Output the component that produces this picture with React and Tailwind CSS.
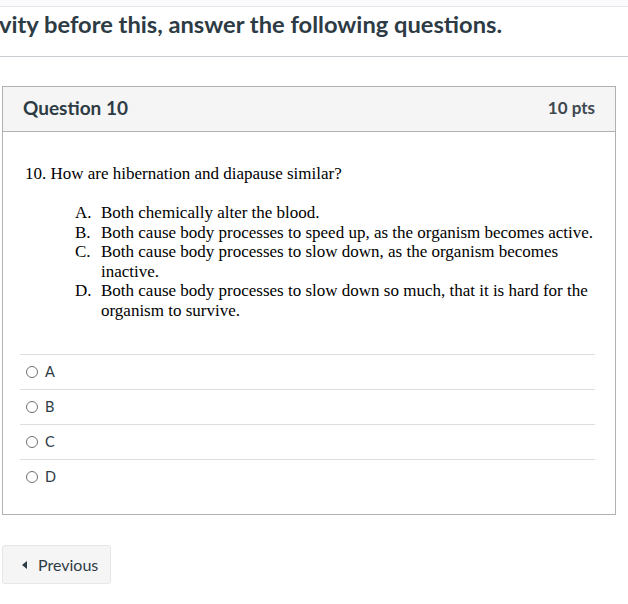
export default function App() {
  const opts = ["A", "B", "C", "D"];
  return (
    <div className="w-[628px] h-[604px] bg-white overflow-hidden text-[#2d3b45]" style={{ fontFamily: "Lato, 'Noto Sans', sans-serif" }}>
      <div className="h-[7px] bg-[#fbfafd] border-b border-[#e6e2ee]" />
      <div className="h-[50px] border-b border-[#c7cdd1] flex items-start">
        <h2 className="text-[23.7px] font-bold leading-[30px] mt-[2px] -ml-[1px] whitespace-nowrap">vity before this, answer the following questions.</h2>
      </div>
      <div className="h-[29px]" />
      <div className="ml-[2px] w-[614px] border border-[#aeb2b5]">
        <div className="h-[45px] bg-[#f5f5f5] border-b border-[#aeb2b5] flex items-center justify-between pl-[20px] pr-[20px]">
          <span className="text-[19px] font-bold leading-[24px] -mt-[3px]">Question 10</span>
          <span className="text-[17px] font-bold leading-[24px] -mt-[3px] text-[#3d4850]">10 pts</span>
        </div>
        <div className="pt-[32px] text-black" style={{ fontFamily: "'Liberation Serif', 'Times New Roman', serif" }}>
          <p className="ml-[22px] text-[17px] leading-[19px]">10. How are hibernation and diapause similar?</p>
          <ol className="mt-[20px] ml-[72px] text-[17px] leading-[19.5px]">
            {[
              ["A.", "Both chemically alter the blood."],
              ["B.", "Both cause body processes to speed up, as the organism becomes active."],
              ["C.", "Both cause body processes to slow down, as the organism becomes inactive."],
              ["D.", "Both cause body processes to slow down so much, that it is hard for the organism to survive."],
            ].map(([l, t]) => (
              <li key={l} className="flex">
                <span className="w-[26px] shrink-0">{l}</span>
                <span className="w-[496px] shrink-0">{t}</span>
              </li>
            ))}
          </ol>
        </div>
        <div className="mt-[34px] ml-[17px] mr-[20px] pb-[20px]">
          {opts.map((o) => (
            <div key={o} className="h-[35px] border-t border-[#dcdedf] flex items-center">
              <span className="ml-[6px] w-[12px] h-[12px] rounded-full border border-[#707070] bg-white" />
              <span className="ml-[7px] text-[14.5px] text-[#2d3b45]">{o}</span>
            </div>
          ))}
        </div>
      </div>
      <div className="h-[30px]" />
      <button className="ml-[2px] w-[109px] h-[39px] bg-[#f5f5f5] border border-[#e4e6e8] rounded-[3px] flex items-center pl-[19px] text-[16px] text-[#2d3b45]">
        <svg width="6" height="8" viewBox="0 0 6 8" className="mr-[10px]"><path d="M5 0 L0 4 L5 8 Z" fill="#2d3b45" /></svg>
        Previous
      </button>
    </div>
  );
}
